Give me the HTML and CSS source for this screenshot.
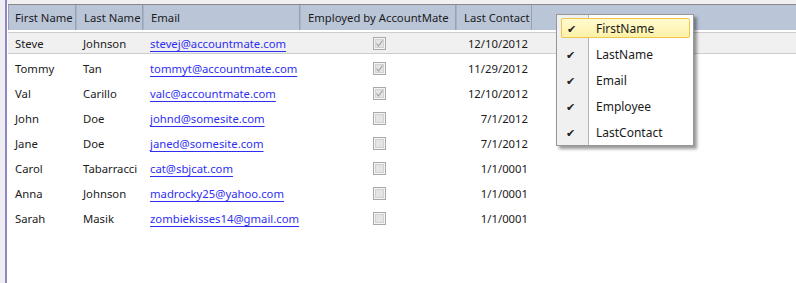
FILE: index.html
```html
<!doctype html>
<html lang="en">
<head>
  <meta charset="utf-8">
  <title>Contacts Grid</title>
  <link rel="stylesheet" href="styles.css">
</head>
<body>
  <div class="window">
    <div class="edge"></div>
    <div class="grid">
      <div class="top"></div>
      <div class="head">
        <div class="hcell">First Name</div>
        <div class="hcell">Last Name</div>
        <div class="hcell">Email</div>
        <div class="hcell">Employed by AccountMate</div>
        <div class="hcell">Last Contact</div>
        <div class="hfill"></div>
      </div>

      <div class="rows">
        <div class="row selected">
          <div class="cell">Steve</div>
          <div class="cell">Johnson</div>
          <div class="cell"><a class="mail">stevej@accountmate.com</a></div>
          <div class="cell check"><svg class="box" width="13" height="13" viewBox="0 0 13 13"><rect x="0.5" y="0.5" width="12" height="12" fill="#f4f4f4" stroke="#a9a9a9"/><rect x="2.5" y="2.5" width="8" height="8" fill="#e4e4e4" stroke="#d2d2d2"/><path d="M3.5 6.5 L5.5 9 L9.5 3.5" fill="none" stroke="#a2a2a2" stroke-width="1.2"/></svg></div>
          <div class="cell date">12/10/2012</div>
        </div>
        <div class="row">
          <div class="cell">Tommy</div>
          <div class="cell">Tan</div>
          <div class="cell"><a class="mail">tommyt@accountmate.com</a></div>
          <div class="cell check"><svg class="box" width="13" height="13" viewBox="0 0 13 13"><rect x="0.5" y="0.5" width="12" height="12" fill="#f4f4f4" stroke="#a9a9a9"/><rect x="2.5" y="2.5" width="8" height="8" fill="#e4e4e4" stroke="#d2d2d2"/><path d="M3.5 6.5 L5.5 9 L9.5 3.5" fill="none" stroke="#a2a2a2" stroke-width="1.2"/></svg></div>
          <div class="cell date">11/29/2012</div>
        </div>
        <div class="row">
          <div class="cell">Val</div>
          <div class="cell">Carillo</div>
          <div class="cell"><a class="mail">valc@accountmate.com</a></div>
          <div class="cell check"><svg class="box" width="13" height="13" viewBox="0 0 13 13"><rect x="0.5" y="0.5" width="12" height="12" fill="#f4f4f4" stroke="#a9a9a9"/><rect x="2.5" y="2.5" width="8" height="8" fill="#e4e4e4" stroke="#d2d2d2"/><path d="M3.5 6.5 L5.5 9 L9.5 3.5" fill="none" stroke="#a2a2a2" stroke-width="1.2"/></svg></div>
          <div class="cell date">12/10/2012</div>
        </div>
        <div class="row">
          <div class="cell">John</div>
          <div class="cell">Doe</div>
          <div class="cell"><a class="mail">johnd@somesite.com</a></div>
          <div class="cell check"><svg class="box" width="13" height="13" viewBox="0 0 13 13"><rect x="0.5" y="0.5" width="12" height="12" fill="#f4f4f4" stroke="#a9a9a9"/><rect x="2.5" y="2.5" width="8" height="8" fill="#e4e4e4" stroke="#d2d2d2"/></svg></div>
          <div class="cell date">7/1/2012</div>
        </div>
        <div class="row">
          <div class="cell">Jane</div>
          <div class="cell">Doe</div>
          <div class="cell"><a class="mail">janed@somesite.com</a></div>
          <div class="cell check"><svg class="box" width="13" height="13" viewBox="0 0 13 13"><rect x="0.5" y="0.5" width="12" height="12" fill="#f4f4f4" stroke="#a9a9a9"/><rect x="2.5" y="2.5" width="8" height="8" fill="#e4e4e4" stroke="#d2d2d2"/></svg></div>
          <div class="cell date">7/1/2012</div>
        </div>
        <div class="row">
          <div class="cell">Carol</div>
          <div class="cell">Tabarracci</div>
          <div class="cell"><a class="mail">cat@sbjcat.com</a></div>
          <div class="cell check"><svg class="box" width="13" height="13" viewBox="0 0 13 13"><rect x="0.5" y="0.5" width="12" height="12" fill="#f4f4f4" stroke="#a9a9a9"/><rect x="2.5" y="2.5" width="8" height="8" fill="#e4e4e4" stroke="#d2d2d2"/></svg></div>
          <div class="cell date">1/1/0001</div>
        </div>
        <div class="row">
          <div class="cell">Anna</div>
          <div class="cell">Johnson</div>
          <div class="cell"><a class="mail">madrocky25@yahoo.com</a></div>
          <div class="cell check"><svg class="box" width="13" height="13" viewBox="0 0 13 13"><rect x="0.5" y="0.5" width="12" height="12" fill="#f4f4f4" stroke="#a9a9a9"/><rect x="2.5" y="2.5" width="8" height="8" fill="#e4e4e4" stroke="#d2d2d2"/></svg></div>
          <div class="cell date">1/1/0001</div>
        </div>
        <div class="row">
          <div class="cell">Sarah</div>
          <div class="cell">Masik</div>
          <div class="cell"><a class="mail">zombiekisses14@gmail.com</a></div>
          <div class="cell check"><svg class="box" width="13" height="13" viewBox="0 0 13 13"><rect x="0.5" y="0.5" width="12" height="12" fill="#f4f4f4" stroke="#a9a9a9"/><rect x="2.5" y="2.5" width="8" height="8" fill="#e4e4e4" stroke="#d2d2d2"/></svg></div>
          <div class="cell date">1/1/0001</div>
        </div>
      </div>
    </div>

    <!-- column chooser context menu -->
    <div class="menu">
      <div class="menu-item hot"><span class="tick">✔</span><span class="label">FirstName</span></div>
      <div class="menu-item"><span class="tick">✔</span><span class="label">LastName</span></div>
      <div class="menu-item"><span class="tick">✔</span><span class="label">Email</span></div>
      <div class="menu-item"><span class="tick">✔</span><span class="label">Employee</span></div>
      <div class="menu-item"><span class="tick">✔</span><span class="label">LastContact</span></div>
    </div>
  </div>
</body>
</html>
```

FILE: styles.css
```css
:root {
  --header: #bac6d8;
  --header-line: #98a2b3;
  --text: #1b1b1b;
  --link: #2f2ff2;
  --edge: #8f86c3;
}

* {
  margin: 0;
  padding: 0;
  box-sizing: border-box;
}

body {
  font-family: 'Noto Sans', 'Open Sans', sans-serif;
  font-size: 11.3px;
  color: var(--text);
  background: #ffffff;
}

.window {
  position: relative;
  display: flex;
  width: 796px;
  height: 283px;
  overflow: hidden;
  background: #ffffff;
}

.edge {
  width: 7px;
  background: #efeff3;
  border-right: 2px solid var(--edge);
}

.grid {
  flex: 1;
  display: flex;
  flex-direction: column;
  padding-left: 1px;
}

.top {
  height: 4px;
  margin-left: -1px;
  background: #f0f0f0;
}

.head,
.row {
  display: grid;
  grid-template-columns: 68px 67px 157px 156px 76px 1fr;
}

.head {
  height: 26px;
  background: var(--header);
  border-top: 1px solid #8a8a8a;
}

.hcell {
  display: flex;
  align-items: center;
  padding-left: 7px;
  border-left: 1px solid #a9b3c3;
  border-right: 1px solid var(--header-line);
  white-space: nowrap;
  overflow: hidden;
}

.hcell:first-child {
  border-left-color: var(--header-line);
  padding-left: 6px;
}

.rows {
  padding-top: 1px;
}

.row {
  height: 25px;
  align-items: center;
}

.row.selected {
  height: 22px;
  margin: 1px 0 2px;
  background: #f0f0f0;
  border-top: 1px solid #cdcdcd;
  border-bottom: 1px solid #cdcdcd;
}

.cell {
  padding-left: 7px;
  white-space: nowrap;
}

.mail {
  color: var(--link);
  text-decoration: underline;
  text-underline-offset: 3px;
}

.check {
  display: flex;
  justify-content: center;
  padding-left: 3px;
}

.box {
  display: block;
}

.date {
  text-align: right;
  padding-right: 4px;
}

.menu {
  position: absolute;
  left: 556px;
  top: 14px;
  width: 138px;
  background: #ffffff linear-gradient(to right, #f0f0f0 0, #f0f0f0 31px, #b4b4b4 31px, #b4b4b4 32px, #ffffff 32px);
  border: 1px solid #979797;
  box-shadow: 3px 3px 3px rgba(0, 0, 0, 0.4);
}

.menu-item {
  display: flex;
  align-items: center;
  height: 26px;
}

.menu-item.hot {
  height: 20px;
  margin: 3px 3px 3px 4px;
  background: linear-gradient(#fffbd0, #fdf1a6);
  border: 1px solid #f0c64a;
  border-radius: 2px;
}

.tick {
  width: 32px;
  padding-left: 9px;
  font-size: 11px;
  color: #222;
}

.menu-item.hot .tick {
  width: 27px;
  padding-left: 5px;
}

.label {
  padding-left: 7px;
  font-size: 12px;
}
```
